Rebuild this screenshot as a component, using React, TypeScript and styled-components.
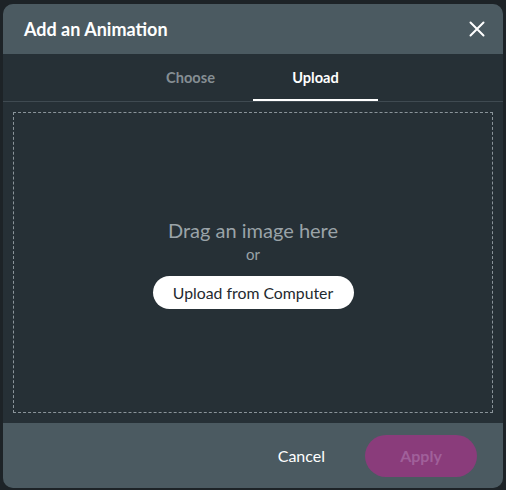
import React from 'react';
import styled, { createGlobalStyle } from 'styled-components';

const GlobalStyle = createGlobalStyle`
  html, body {
    margin: 0;
    padding: 0;
    background: #1d2327;
    font-family: Lato, "Noto Sans", sans-serif;
  }
`;

const App = () => (
  <>
    <GlobalStyle />
    <Overlay>
      <Modal>
        <Header>
          <Title>Add an Animation</Title>
          <CloseButton aria-label="Close">
            <svg width="16" height="16" viewBox="0 0 16 16">
              <path d="M1.5 1.5 L14.5 14.5 M14.5 1.5 L1.5 14.5" stroke="#fff" strokeWidth="2" strokeLinecap="round" />
            </svg>
          </CloseButton>
        </Header>
        <Tabs>
          <Tab>Choose</Tab>
          <Tab $active>Upload</Tab>
        </Tabs>
        <Body>
          <DropZone>
            <DropText>Drag an image here</DropText>
            <OrText>or</OrText>
            <UploadButton>Upload from Computer</UploadButton>
          </DropZone>
        </Body>
        <Footer>
          <CancelButton>Cancel</CancelButton>
          <ApplyButton disabled>Apply</ApplyButton>
        </Footer>
      </Modal>
    </Overlay>
  </>
);

export default App;

const Overlay = styled.div`
  width: 506px;
  height: 490px;
  padding: 4px 3px 2px 3px;
  box-sizing: border-box;
`;

const Modal = styled.div`
  width: 500px;
  height: 484px;
  border-radius: 10px;
  overflow: hidden;
  background: #263036;
  display: flex;
  flex-direction: column;
`;

const Header = styled.div`
  height: 50px;
  flex-shrink: 0;
  display: flex;
  align-items: center;
  justify-content: space-between;
  padding: 0 16px 0 21px;
  background: #4b5a61;
`;

const Title = styled.h1`
  margin: 0;
  font-size: 18px;
  font-weight: 700;
  color: #fff;
`;

const CloseButton = styled.button`
  border: none;
  background: none;
  padding: 0;
  width: 20px;
  height: 20px;
  display: flex;
  align-items: center;
  justify-content: center;
  cursor: pointer;
`;

const Tabs = styled.div`
  height: 47px;
  flex-shrink: 0;
  display: flex;
  justify-content: center;
  border-bottom: 1px solid #3f4a51;
`;

const Tab = styled.div<{ $active?: boolean }>`
  width: 125px;
  display: flex;
  align-items: center;
  justify-content: center;
  padding-top: 1px;
  box-sizing: border-box;
  font-size: 14.6px;
  font-weight: 700;
  color: ${p => (p.$active ? '#ffffff' : '#858e93')};
  border-bottom: 2px solid ${p => (p.$active ? '#ffffff' : 'transparent')};
`;

const Body = styled.div`
  flex: 1;
  padding: 10px;
  display: flex;
`;

const DropZone = styled.div`
  flex: 1;
  border: 1px dashed #8a949a;
  display: flex;
  flex-direction: column;
  align-items: center;
  justify-content: center;
  padding-top: 3px;
`;

const DropText = styled.div`
  font-size: 20px;
  color: #9aa3a8;
  line-height: 22px;
`;

const OrText = styled.div`
  font-size: 15px;
  color: #9aa3a8;
  line-height: 18px;
  margin-top: 4px;
`;

const UploadButton = styled.button`
  margin-top: 13px;
  width: 201px;
  height: 33px;
  border: none;
  border-radius: 17px;
  background: #fff;
  color: #1f2a30;
  font-family: Lato, "Noto Sans", sans-serif;
  font-size: 15.8px;
  cursor: pointer;
`;

const Footer = styled.div`
  height: 65px;
  flex-shrink: 0;
  display: flex;
  align-items: center;
  justify-content: flex-end;
  padding: 0 26px 0 0;
  background: #4b5a61;
  gap: 40px;
`;

const CancelButton = styled.button`
  border: none;
  background: none;
  color: #fff;
  font-family: Lato, "Noto Sans", sans-serif;
  font-size: 16px;
  padding: 0;
  cursor: pointer;
`;

const ApplyButton = styled.button`
  width: 112px;
  height: 42px;
  border: none;
  border-radius: 21px;
  background: #8a3c7b;
  color: #a0609a;
  font-family: Lato, "Noto Sans", sans-serif;
  font-size: 16px;
  font-weight: 700;
`;
